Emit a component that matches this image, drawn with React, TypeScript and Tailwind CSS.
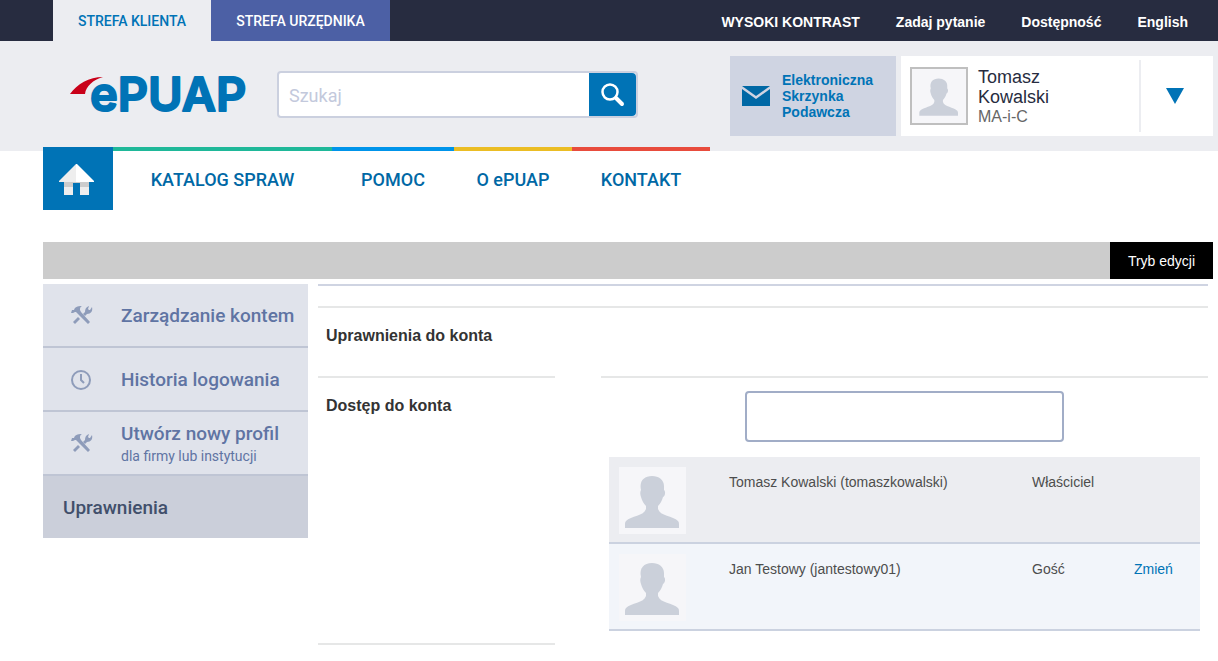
import { FC } from "react";

type SideItem = {
  label: string;
  hint?: string;
  icon: "tools" | "clock";
};

type Account = {
  name: string;
  login: string;
  role: string;
  editable: boolean;
};

const topLinks = ["WYSOKI KONTRAST", "Zadaj pytanie", "Dostępność", "English"];

const sideItems: SideItem[] = [
  { label: "Zarządzanie kontem", icon: "tools" },
  { label: "Historia logowania", icon: "clock" },
  { label: "Utwórz nowy profil", hint: "dla firmy lub instytucji", icon: "tools" },
];

const menu = [
  { label: "KATALOG SPRAW", style: "w-[219px] border-[#1fb899]" },
  { label: "POMOC", style: "w-[122px] border-[#0094ea]" },
  { label: "O ePUAP", style: "w-[118px] border-[#ebbd24]" },
  { label: "KONTAKT", style: "w-[138px] border-[#e84c3d]" },
];

const accounts: Account[] = [
  { name: "Tomasz Kowalski", login: "tomaszkowalski", role: "Właściciel", editable: false },
  { name: "Jan Testowy", login: "jantestowy01", role: "Gość", editable: true },
];

const Logo: FC = () => (
  <svg width="178" height="40" viewBox="0 0 178 40" className="overflow-visible" role="img" aria-label="ePUAP">
    <path d="M0 19 C7 9 19 2 33 2 C23 5 16 11 15 19 Z" fill="#c90019" />
    <text
      x="20"
      y="36"
      fill="#0073b6"
      stroke="#0073b6"
      strokeWidth="2"
      strokeLinejoin="round"
      className="font-['Inter',sans-serif] text-[47px] font-semibold">
      ePUAP
    </text>
  </svg>
);

const Avatar: FC<{ className: string }> = ({ className }) => (
  <svg viewBox="0 0 67 67" className={className} aria-hidden="true">
    <path
      d="M33 9 C40 9 45 13 45 19 V23 C47 25 46 29 44 30 C43 34 41 37 39 39 V42 C41 49 54 49 59 54 Q60 55 60 57 V61 H6 V57 Q6 55 7 54 C12 49 25 49 27 42 V39 C25 37 23 34 22 30 C21 27 21 25 22 23 C20 14 25 9 33 9 Z"
      fill="#cbd0da"
    />
  </svg>
);

const ToolsIcon: FC = () => (
  <svg width="22" height="22" viewBox="0 0 22 22" fill="#8e9cba" aria-hidden="true">
    <path d="M0 8 L1 5 L3 5 C4 2 6 1 11 1 C9 2 9 3 9 5 L10 7 L19 17 L17 19 L7 9 L5 7 L4 7 L2 8 Z" />
    <path d="M18 1 L17 4 L18 5 H19 L21 2 C22 6 20 9 16 9 L14 11 L12 9 L14 7 C14 4 15 2 18 1 Z" />
    <path d="M7 12 L9 14 L4 19 L2 17 Z" />
  </svg>
);

const ClockIcon: FC = () => (
  <svg width="22" height="22" viewBox="0 0 22 22" fill="none" stroke="#8e9cba" strokeWidth="2" aria-hidden="true">
    <circle cx="10" cy="11" r="9" />
    <path d="M10 5 V11 L13 14" />
  </svg>
);

const TopBar: FC = () => (
  <div className="flex h-[41px] items-stretch justify-between bg-[#272c40] pr-[30px] pl-[53px]">
    <nav className="flex font-['Roboto',sans-serif] text-sm font-medium">
      <a href="#klient" className="flex w-[158px] items-center justify-center bg-[#ecedf1] text-[#0073b6]">
        STREFA KLIENTA
      </a>
      <a href="#urzednik" className="flex w-[179px] items-center justify-center bg-[#4c60a5] text-white">
        STREFA URZĘDNIKA
      </a>
    </nav>
    <nav className="flex items-center gap-9 pt-[2px] text-sm font-bold text-white">
      {topLinks.map((label) => (
        <a key={label} href="#info">
          {label}
        </a>
      ))}
    </nav>
  </div>
);

const Header: FC = () => (
  <header className="flex h-[110px] items-start justify-between bg-[#ecedf1] pr-[5px] pl-[70px]">
    <div className="flex items-start gap-[29px] pt-[30px]">
      <a href="#start" className="pt-1">
        <Logo />
      </a>
      <form className="flex h-[47px] w-[361px] rounded border-2 border-[#cbd0df] bg-white">
        <input
          type="text"
          aria-label="Szukaj"
          placeholder="Szukaj"
          className="min-w-0 flex-1 px-[10px] pt-[2px] font-['Roboto',sans-serif] text-lg outline-none placeholder:text-[#c3c9dc]"
        />
        <button type="button" aria-label="Szukaj" className="flex w-[47px] items-center justify-center rounded-r-sm bg-[#0073b6]">
          <svg width="24" height="24" viewBox="0 0 24 24" fill="none" stroke="#fff" aria-hidden="true">
            <circle cx="9" cy="9" r="7.5" strokeWidth="2.5" />
            <path d="M15 15 L21 21" strokeWidth="4" strokeLinecap="round" />
          </svg>
        </button>
      </form>
    </div>
    <div className="flex h-[95px] gap-[5px] pt-[15px]">
      <a href="#skrzynka" className="flex w-[166px] items-center gap-3 bg-[#cfd4e2] pl-3 text-sm leading-4 font-bold text-[#0073b6]">
        <svg width="28" height="20" viewBox="0 0 28 20" fill="#0068a5" aria-hidden="true">
          <path d="M0 0 H28 L14 10 Z" />
          <path d="M0 3 L14 13 L28 3 V20 H0 Z" />
        </svg>
        <span>
          Elektroniczna
          <br />
          Skrzynka
          <br />
          Podawcza
        </span>
      </a>
      <div className="flex w-[312px] items-center bg-white pl-[9px]">
        <span className="flex size-[58px] items-center justify-center border-2 border-[#bfbfbf] bg-[#f6f6f9]">
          <Avatar className="size-12" />
        </span>
        <div className="flex-1 pt-[2px] pl-[10px] text-lg leading-5 text-[#272c40]">
          Tomasz
          <br />
          Kowalski
          <div className="text-base leading-5 text-[#666]">MA-i-C</div>
        </div>
        <button type="button" aria-label="Menu konta" className="flex h-[72px] w-[74px] items-center justify-center border-l-2 border-[#ecedf1] pr-1">
          <svg width="18" height="16" viewBox="0 0 18 16" fill="#0073b6" aria-hidden="true">
            <path d="M0 0 H18 L9 16 Z" />
          </svg>
        </button>
      </div>
    </div>
  </header>
);

// the coloured strip overlaps the bottom edge of the header
const MainMenu: FC = () => (
  <nav className="-mt-1 flex h-[63px] pl-[43px] font-['Roboto',sans-serif] text-lg font-medium text-[#0068a5]">
    <a href="#start" aria-label="Strona główna" className="flex w-[70px] items-center justify-center bg-[#0073b6] pt-[2px] pr-[3px]">
      <svg width="35" height="31" viewBox="0 0 35 31" aria-hidden="true">
        <path d="M5 17 H30 V31 H21 V19 H14 V31 H5 Z" fill="#eee" />
        <path d="M5 17 H30 V23 H21 V19 H14 V23 H5 Z" fill="#ccc" />
        <path d="M17 0 L0 17 V18 H17 Z" fill="#eee" />
        <path d="M17 0 H18 L35 17 V18 H17 Z" fill="#fff" />
      </svg>
    </a>
    {menu.map(({ label, style }) => (
      <a key={label} href="#menu" className={`flex items-center justify-center border-t-4 pb-[2px] ${style}`}>
        {label}
      </a>
    ))}
  </nav>
);

const SideMenu: FC = () => (
  <nav className="w-[265px] shrink-0 self-start bg-[#e0e3eb] font-['Roboto',sans-serif] text-[19px] text-[#5f74a3]">
    {sideItems.map(({ label, hint, icon }) => (
      <a key={label} href="#konto" className="flex h-16 items-center gap-7 border-b-2 border-[#bfc5d4] pt-[2px] pl-7 font-medium">
        {icon === "tools" ? <ToolsIcon /> : <ClockIcon />}
        <span className="leading-6 whitespace-nowrap">
          {label}
          {hint && <span className="block text-sm leading-5 font-normal">{hint}</span>}
        </span>
      </a>
    ))}
    <a href="#uprawnienia" className="flex h-[62px] items-center bg-[#cbcfda] pt-[2px] pl-5 font-medium text-[#414f6b]">
      Uprawnienia
    </a>
  </nav>
);

const AccountTable: FC = () => (
  <table className="w-full table-fixed border-separate border-spacing-0 text-left text-sm text-[#4d4d4d]">
    <tbody>
      {accounts.map(({ name, login, role, editable }) => (
        <tr key={login} className="h-[87px] odd:bg-[#ecedf1] even:bg-[#f2f5fa]">
          <td className="w-[120px] border-b-2 border-[#cbd2e0] pt-[10px] pl-[10px] align-top">
            <Avatar className="size-[67px] bg-[#f6f6f9]" />
          </td>
          <td className="border-b-2 border-[#cbd2e0] pt-[15px] align-top">
            {name} ({login})
          </td>
          <td className="w-[102px] border-b-2 border-[#cbd2e0] pt-[15px] align-top">{role}</td>
          <td className="w-[66px] border-b-2 border-[#cbd2e0] pt-[15px] align-top">
            {editable && (
              <a href="#zmien" className="text-[#0073b6]">
                Zmień
              </a>
            )}
          </td>
        </tr>
      ))}
    </tbody>
  </table>
);

const Permissions: FC = () => (
  <main className="min-w-0 flex-1 border-t-2 border-[#cfd4e2] pt-5">
    <h1 className="h-[70px] border-t-2 border-[#e6e7e7] px-2 pt-4 text-base font-bold text-[#333]">
      Uprawnienia do konta
    </h1>
    <div className="flex gap-[46px]">
      <label htmlFor="access" className="w-[237px] border-y-2 border-[#e6e7e7] px-2 pt-4 text-base font-bold text-[#333]">
        Dostęp do konta
      </label>
      <div className="flex-1 border-t-2 border-[#e6e7e7] px-2 pt-[13px] pb-[14px]">
        <input
          id="access"
          type="text"
          className="mx-auto mb-[15px] block h-[51px] w-[319px] rounded border-2 border-[#a1adc7] px-3 outline-none"
        />
        <AccountTable />
      </div>
    </div>
  </main>
);

export default function App() {
  return (
    <div className="min-h-screen bg-white font-['Liberation_Sans',sans-serif]">
      <TopBar />
      <Header />
      <MainMenu />
      <div className="pt-8 pr-[5px] pl-[43px]">
        <div className="flex h-[37px] justify-end bg-[#ccc]">
          <button type="button" className="w-[103px] bg-black text-sm text-white">
            Tryb edycji
          </button>
        </div>
        <div className="flex gap-[10px] pt-[5px] pr-[5px]">
          <SideMenu />
          <Permissions />
        </div>
      </div>
    </div>
  );
}
